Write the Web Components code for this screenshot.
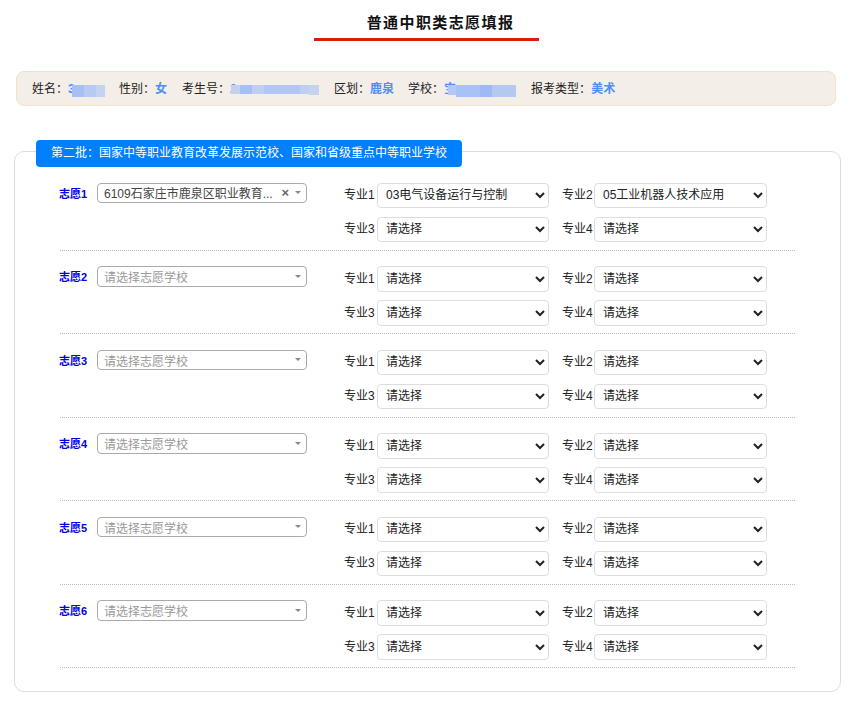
<!DOCTYPE html>
<html lang="zh"><head><meta charset="utf-8"><title>普通中职类志愿填报</title>
<style>
html,body{margin:0;background:#fff;}
body{font-family:"Liberation Sans","Noto Sans CJK SC",sans-serif;font-size:12px;color:#212529;}
</style></head><body>
<page-title>普通中职类志愿填报</page-title>
<info-bar>
  <info-item label="姓名"><mosaic-blur w="37" lead="3" at="4" top="5" segs="12:#a6c0f5:12,12:#b7caf1:12,9:#c5d3f0:12"></mosaic-blur></info-item>
  <info-item label="性别" style="margin-right:1px">女</info-item>
  <info-item label="考生号"><mosaic-blur w="90" lead="2" at="1" top="5" segs="9:#c3d1f1:9,12:#a6c0f5:9,12:#c0cef0:9,36:#b3c7f2:9,9:#c0cff0:9,10:#c5d2f0:10"></mosaic-blur></info-item>
  <info-item label="区划">鹿泉</info-item>
  <info-item label="学校"><mosaic-blur w="73" lead="宝" at="4" top="5" segs="8:#b2c8f5:10,24:#a9c2f5:12,12:#9fb9f4:12,24:#b5c8f0:12"></mosaic-blur></info-item>
  <info-item label="报考类型">美术</info-item>
</info-bar>
<batch-card heading="第二批：国家中等职业教育改革发展示范校、国家和省级重点中等职业学校">
  <wish-row n="1" school="6109石家庄市鹿泉区职业教育..." m1="03电气设备运行与控制" m2="05工业机器人技术应用"></wish-row>
  <wish-row n="2"></wish-row>
  <wish-row n="3"></wish-row>
  <wish-row n="4"></wish-row>
  <wish-row n="5"></wish-row>
  <wish-row n="6"></wish-row>
</batch-card>
<script>
const FONT='"Liberation Sans","Noto Sans CJK SC",sans-serif';
function el(name,html){customElements.define(name,class extends HTMLElement{
  connectedCallback(){ if(this.shadowRoot) return; const r=this.attachShadow({mode:'open'}); r.innerHTML=typeof html==='function'?html(this):html; }
});}
el('page-title',`<style>
:host{display:block;padding-top:13px;margin-left:-2px;text-align:center}
h1{display:inline-block;box-sizing:border-box;margin:0;padding:0 0 5px 29px;width:225px;font:bold 15px/20px ${FONT};letter-spacing:1.4px;color:#111;border-bottom:3px solid #d81e06;}
</style><h1><slot></slot></h1>`);
el('info-bar',`<style>
:host{display:flex;align-items:center;gap:14px;box-sizing:border-box;margin:30px 18px 0 16px;height:35px;padding:0 15px;background:#f3eee8;border:1px solid #f5e0c9;border-radius:8px;font:12px/18px ${FONT};color:#222}
</style><slot></slot>`);
el('info-item',h=>`<style>
:host{display:inline-flex;align-items:center;white-space:nowrap}
b{font-weight:bold;color:#4d8df5;display:inline-flex;align-items:center}
</style>${h.getAttribute('label')}：<b><slot></slot></b>`);
el('mosaic-blur',h=>{const g=k=>h.getAttribute(k);
  const segs=g('segs').split(',').map(s=>{const [w,c,t]=s.split(':');return `<i style="width:${w}px;height:${t}px;background:${c}"></i>`}).join('');
  return `<style>
:host{display:inline-block;position:relative;width:${g('w')}px;height:18px;line-height:18px;overflow:hidden}
.m{position:absolute;left:${g('at')}px;top:${g('top')}px;display:flex;align-items:flex-start}
i{display:block;flex:none}
</style>${g('lead')}<span class="m">${segs}</span>`});
el('batch-card',h=>`<style>
:host{display:block;position:relative;box-sizing:border-box;margin:45px 13px 0 14px;height:541px;padding:15px 45px 0 45px;border:1px solid #ddd;border-radius:10px}
.head{position:absolute;left:21px;top:-12px;height:27px;padding:0 15px;background:#0080ff;color:#fff;border-radius:4px;font:12px/27px ${FONT};white-space:nowrap}
</style><div class="head">${h.getAttribute('heading')}</div><slot></slot>`);
el('wish-row',h=>{const a=k=>h.getAttribute(k)||'';return `<style>
:host{display:flex;align-items:flex-start;box-sizing:border-box;height:83.5px;width:735px;padding-top:15.5px;border-bottom:1px dotted #bbb}
.l{flex:none;width:38px;margin-top:4px;font:bold 11px/14px ${FONT};color:#0000e6;margin-left:-1px;}
.m{display:grid;grid-template-columns:205px 206px;column-gap:12px;row-gap:8.5px;margin-left:37px}
</style><div class="l">志愿${a('n')}</div><school-select value="${a('school')}"></school-select>
<div class="m">
<major-field n="1" value="${a('m1')}"></major-field><major-field n="2" value="${a('m2')}"></major-field>
<major-field n="3"></major-field><major-field n="4"></major-field></div>`});
el('school-select',h=>{const v=h.getAttribute('value');return `<style>
:host{display:flex;align-items:center;flex:none;box-sizing:border-box;width:210px;height:20.5px;padding:0 5px 0 6px;border:1px solid #aaa;border-radius:4px;font:12px/19px ${FONT};color:#444;background:#fff}
.t{flex:1;min-width:0;white-space:nowrap;padding-top:3px}
.p{color:#999;padding-top:5px}
.x{font-size:13px;font-weight:bold;color:#666;margin:0 6px 0 4px;line-height:19px}
.a{width:0;height:0;border:3px solid transparent;border-top-color:#888;border-bottom:0;}
</style><span class="t ${v?'':'p'}">${v||'请选择志愿学校'}</span>${v?'<span class="x">×</span>':''}<span class="a"></span>`});
el('major-field',h=>{const v=h.getAttribute('value')||'请选择';const n=+h.getAttribute('n');return `<style>
:host{display:flex;align-items:center;font:12px/18px ${FONT};color:#222}
label{flex:none;width:${n%2?33:32}px;margin-left:${n%2?0:1}px;white-space:nowrap}
select{flex:1;min-width:0;height:25.5px;box-sizing:border-box;border:1px solid #ddd;border-radius:4px;background:#fff;padding:0 4px;font:12px ${FONT};color:#222;outline:0}
</style><label>专业${n}</label><select><option>${v}</option></select>`});
</script>
</body></html>
